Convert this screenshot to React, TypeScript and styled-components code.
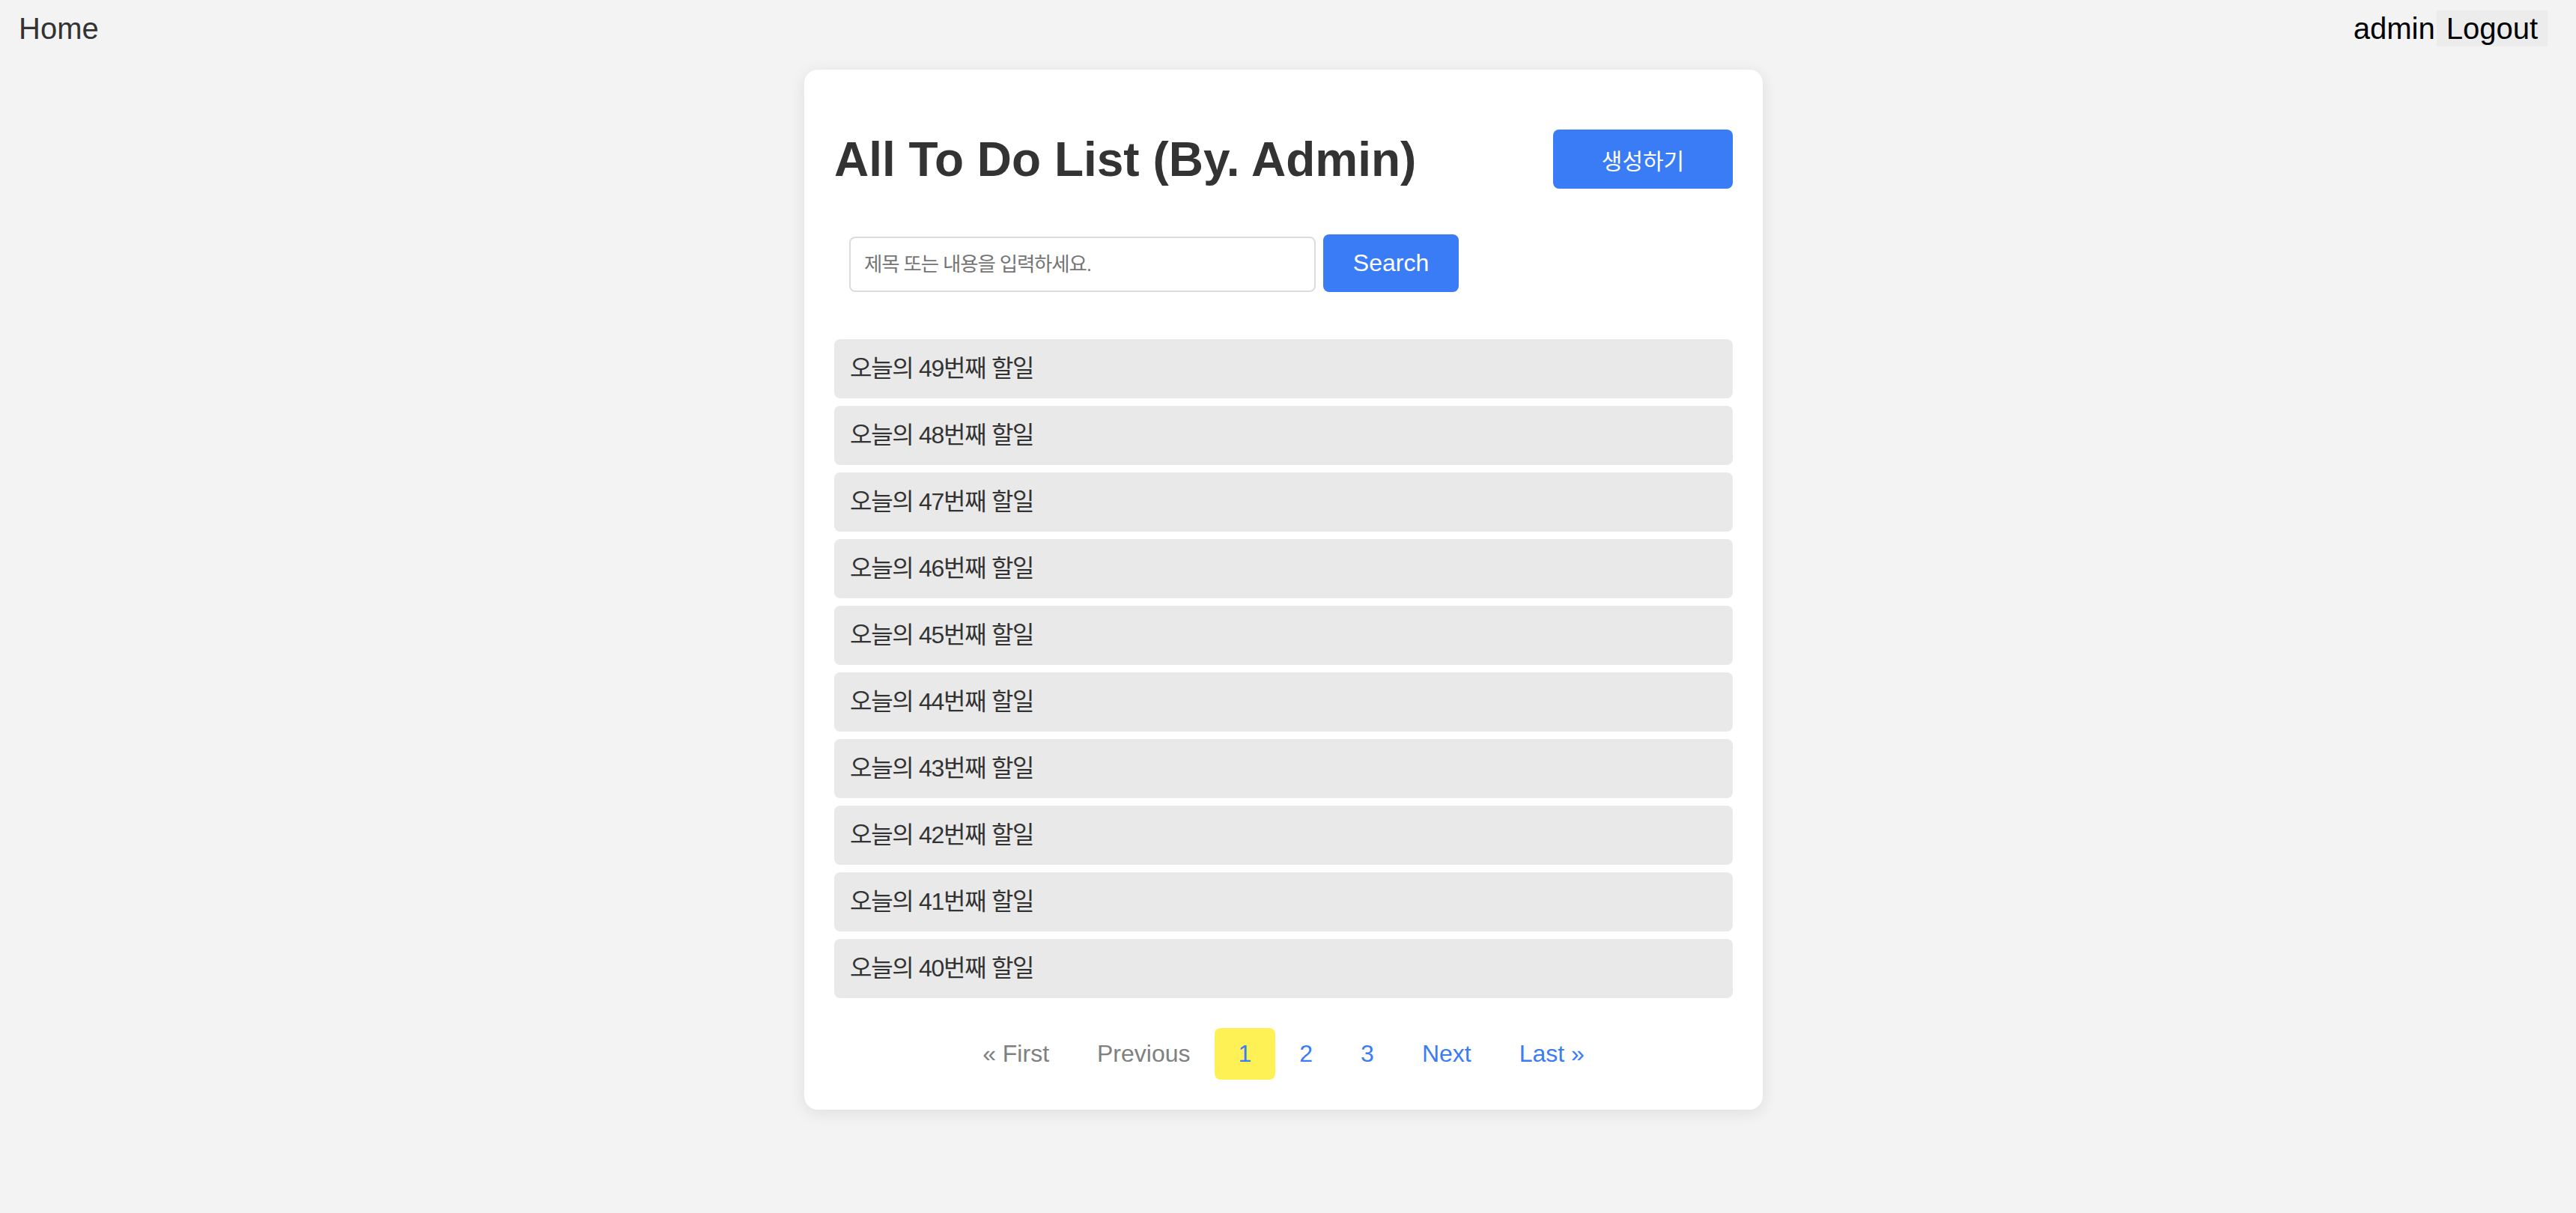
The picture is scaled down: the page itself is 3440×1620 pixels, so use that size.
import React, { useState } from "react";
import styled, { createGlobalStyle } from "styled-components";

const GlobalStyle = createGlobalStyle`
  html, body {
    margin: 0;
    padding: 0;
    background: #f3f3f3;
    font-family: "Liberation Sans", Arial, "Noto Sans CJK KR", sans-serif;
  }
`;

const Page = styled.div`
  min-height: 1620px;
  padding-right: 12px;
  box-sizing: border-box;
`;

const TopBar = styled.header`
  display: flex;
  align-items: center;
  justify-content: space-between;
  padding: 14px 26px 0 25px;
  height: 48px;
  font-size: 40px;
`;

const HomeLink = styled.a`
  color: #333;
  text-decoration: none;
  line-height: 46px;
`;

const UserBox = styled.div`
  display: flex;
  align-items: center;
  gap: 2px;
  color: #000;
`;

const LogoutButton = styled.button`
  font: inherit;
  color: #000;
  background: #ececec;
  border: none;
  height: 48px;
  padding: 0 13px;
  line-height: 46px;
  cursor: pointer;
`;

const Card = styled.main`
  width: 1280px;
  margin: 31px auto 0;
  box-sizing: border-box;
  padding: 40px;
  background: #fff;
  border-radius: 18px;
  box-shadow: 0 4px 22px rgba(0, 0, 0, 0.09);
`;

const CardHeader = styled.div`
  display: flex;
  align-items: center;
  justify-content: space-between;
  margin-top: 40px;
  height: 79px;
`;

const Title = styled.h1`
  margin: 0;
  font-size: 64px;
  font-weight: 700;
  color: #333;
`;

const PrimaryButton = styled.button<{ $w: number; $h: number; $size: number }>`
  width: ${({ $w }) => $w}px;
  height: ${({ $h }) => $h}px;
  border: none;
  border-radius: 8px;
  background: #397cf6;
  color: #fff;
  font-family: inherit;
  font-size: ${({ $size }) => $size}px;
  cursor: pointer;
  padding: 0;
`;

const SearchRow = styled.form`
  display: flex;
  align-items: flex-end;
  gap: 10px;
  margin: 61px 0 0 20px;
`;

const SearchInput = styled.input`
  width: 623px;
  height: 74px;
  box-sizing: border-box;
  border: 2px solid #dcdcdc;
  border-radius: 8px;
  padding: 0 18px;
  font-family: inherit;
  font-size: 26.5px;
  letter-spacing: -1.2px;
  color: #333;

  &::placeholder {
    color: #757575;
  }
`;

const TodoList = styled.ul`
  list-style: none;
  margin: 63px 0 0;
  padding: 0;
  display: flex;
  flex-direction: column;
  gap: 10px;
`;

const TodoItem = styled.li`
  background: #e9e9e9;
  border-radius: 8px;
  padding: 20px 21px;
  font-size: 32px;
  line-height: 39px;
  letter-spacing: -1.3px;
  color: #333;
`;

const Pagination = styled.nav`
  display: flex;
  justify-content: center;
  margin-top: 40px;
`;

const PageLink = styled.a<{ $active?: boolean; $disabled?: boolean }>`
  padding: 16px 32px;
  font-size: 32px;
  line-height: 37px;
  border-radius: 8px;
  text-decoration: none;
  cursor: ${({ $disabled }) => ($disabled ? "default" : "pointer")};
  color: ${({ $disabled }) => ($disabled ? "#808080" : "#3b7cf6")};
  background: ${({ $active }) => ($active ? "#fef156" : "transparent")};
`;

const todos = Array.from({ length: 10 }, (_, i) => 49 - i);

export default function App() {
  const [query, setQuery] = useState("");
  const page = 1;

  return (
    <>
      <GlobalStyle />
      <Page>
        <TopBar>
          <HomeLink href="#">Home</HomeLink>
          <UserBox>
            <span>admin</span>
            <LogoutButton type="button">Logout</LogoutButton>
          </UserBox>
        </TopBar>
        <Card>
          <CardHeader>
            <Title>All To Do List (By. Admin)</Title>
            <PrimaryButton type="button" $w={240} $h={79} $size={30}>
              생성하기
            </PrimaryButton>
          </CardHeader>
          <SearchRow onSubmit={(e) => e.preventDefault()}>
            <SearchInput
              value={query}
              onChange={(e) => setQuery(e.target.value)}
              placeholder="제목 또는 내용을 입력하세요."
            />
            <PrimaryButton type="submit" $w={181} $h={77} $size={32}>
              Search
            </PrimaryButton>
          </SearchRow>
          <TodoList>
            {todos.map((n) => (
              <TodoItem key={n}>오늘의 {n}번째 할일</TodoItem>
            ))}
          </TodoList>
          <Pagination>
            <PageLink $disabled>« First</PageLink>
            <PageLink $disabled>Previous</PageLink>
            {[1, 2, 3].map((p) => (
              <PageLink key={p} href="#" $active={p === page}>
                {p}
              </PageLink>
            ))}
            <PageLink href="#">Next</PageLink>
            <PageLink href="#">Last »</PageLink>
          </Pagination>
        </Card>
      </Page>
    </>
  );
}
